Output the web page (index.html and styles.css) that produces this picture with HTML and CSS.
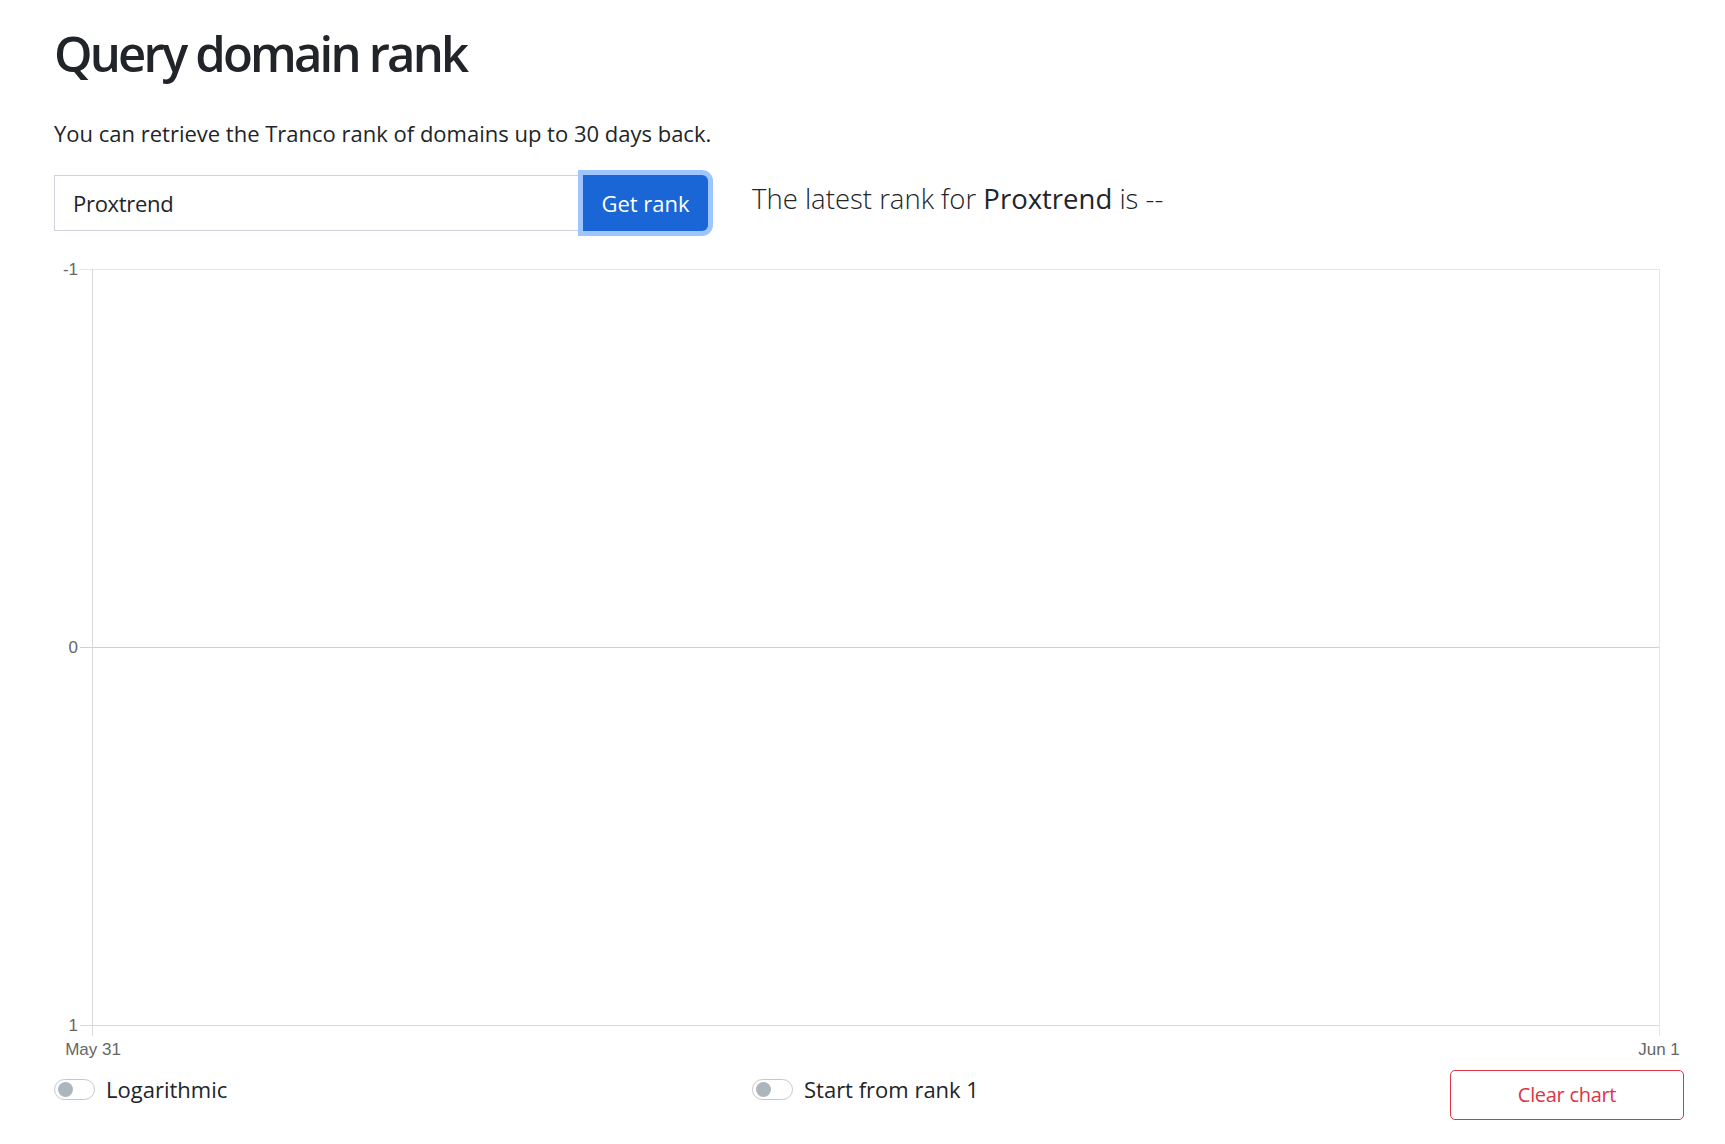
FILE: index.html
```html
<!DOCTYPE html>
<html lang="en">
<head>
<meta charset="utf-8">
<title>Query domain rank</title>
<link rel="stylesheet" href="styles.css">
</head>
<body>
<main class="page">
  <h1 class="title">Query domain rank</h1>
  <p class="intro">You can retrieve the Tranco rank of domains up to 30 days back.</p>

  <div class="query-row">
    <div class="input-group">
      <input class="domain-input" type="text" value="Proxtrend">
      <button class="btn-primary" type="button">Get rank</button>
    </div>
    <p class="lead">The latest rank for <span class="lead-domain">Proxtrend</span> is --</p>
  </div>

  <div class="chart">
    <svg class="chart-svg" width="1630" height="812" viewBox="0 0 1630 812">
      <g class="grid">
        <line x1="26" y1="19.5" x2="1605" y2="19.5" class="g-light"/>
        <line x1="26" y1="397.5" x2="1605" y2="397.5" class="g-zero"/>
        <line x1="26" y1="775.5" x2="1605" y2="775.5" class="g-axis"/>
        <line x1="38.5" y1="19" x2="38.5" y2="786" class="g-axis"/>
        <line x1="1605.5" y1="19" x2="1605.5" y2="786" class="g-light"/>
      </g>
      <g class="ticks">
        <text x="24" y="25" text-anchor="end">-1</text>
        <text x="24" y="403" text-anchor="end">0</text>
        <text x="24" y="781" text-anchor="end">1</text>
        <text x="39" y="805" text-anchor="middle">May 31</text>
        <text x="1605" y="805" text-anchor="middle">Jun 1</text>
      </g>
    </svg>
  </div>

  <div class="controls-row">
    <label class="switch-item">
      <span class="switch"><span class="knob"></span></span>
      <span class="switch-label">Logarithmic</span>
    </label>
    <label class="switch-item">
      <span class="switch"><span class="knob"></span></span>
      <span class="switch-label">Start from rank 1</span>
    </label>
    <button class="btn-outline-danger" type="button">Clear chart</button>
  </div>
</main>
</body>
</html>
```

FILE: styles.css
```css
* { box-sizing: border-box; }

html, body {
  margin: 0;
  padding: 0;
  background: #ffffff;
}

body {
  font-family: "Open Sans", "Noto Sans", "Liberation Sans", sans-serif;
  color: #212529;
  font-size: 22px;
  line-height: 1.5;
}

.page {
  padding: 0 41px 0 54px;
}

.title {
  margin: 24px 0 0;
  font-size: 49px;
  font-weight: 600;
  line-height: 1.2;
  letter-spacing: -2.8px;
}

.intro {
  margin: 34px 0 0;
  font-size: 22px;
}

.query-row {
  display: grid;
  grid-template-columns: 698px 1fr;
  margin-top: 20px;
  align-items: start;
}

.input-group {
  display: flex;
  width: 659px;
  height: 66px;
  padding: 5px 5px 5px 0;
}

.domain-input {
  width: 529px;
  height: 56px;
  border: 1px solid #ced4da;
  border-right: none;
  border-radius: 0;
  padding: 0 18px;
  font-family: inherit;
  font-size: 22px;
  color: #212529;
  outline: none;
  letter-spacing: -0.3px;
}

.btn-primary {
  width: 125px;
  height: 56px;
  border: none;
  border-radius: 0 6px 6px 0;
  background: #1b66d6;
  color: #ffffff;
  font-family: inherit;
  font-size: 22px;
  box-shadow: 0 0 0 5px #9ec5fe;
}

.lead {
  margin: 8px 0 0;
  font-size: 27.5px;
  font-weight: 300;
}

.lead-domain {
  font-weight: 400;
}

.chart {
  margin-top: 14px;
  height: 812px;
}

.chart-svg {
  display: block;
}

.grid line {
  stroke-width: 1;
  shape-rendering: crispEdges;
}

.g-light { stroke: #e6e6e6; }
.g-axis { stroke: #d9d9d9; }
.g-zero { stroke: #cfcfcf; }

.ticks text {
  font-family: "Liberation Sans", Arial, sans-serif;
  font-size: 17px;
  fill: #666666;
}

.controls-row {
  display: grid;
  grid-template-columns: 698px 1fr auto;
  align-items: start;
  margin-top: 8px;
}

.switch-item {
  display: flex;
  align-items: center;
  gap: 11px;
  height: 40px;
}

.switch {
  display: flex;
  align-items: center;
  width: 41px;
  height: 21px;
  border: 1px solid #c3c8cd;
  border-radius: 11px;
  padding: 0 3px;
  background: #ffffff;
}

.knob {
  width: 15px;
  height: 15px;
  border-radius: 50%;
  background: #adb5bd;
}

.switch-label {
  font-size: 22px;
}

.btn-outline-danger {
  width: 234px;
  height: 50px;
  border: 1px solid #dc3545;
  border-radius: 5px;
  background: #ffffff;
  color: #dc3545;
  font-family: inherit;
  font-size: 20px;
  letter-spacing: -0.3px;
}
```
